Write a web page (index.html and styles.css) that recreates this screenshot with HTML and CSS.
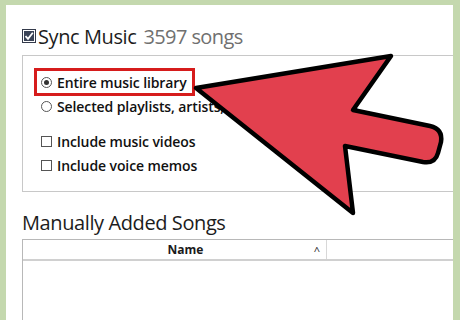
FILE: index.html
```html
<!DOCTYPE html>
<html>
<head>
<meta charset="utf-8">
<link rel="stylesheet" href="styles.css">
</head>
<body>
<div class="panel">
  <div class="sync-row">
    <svg class="big-check" width="14" height="14" viewBox="0 0 14 14">
      <rect x="0.5" y="0.5" width="13" height="13" fill="#fff" stroke="#333a4a"/>
      <rect x="2" y="2" width="10" height="10" fill="#3a4356"/>
      <path d="M3.5 7.2 L6 9.8 L10.8 3.8" fill="none" stroke="#fff" stroke-width="1.8"/>
    </svg>
    <span class="sync-title">Sync Music</span>
    <span class="sync-count">3597 songs</span>
  </div>
  <div class="group">
    <div class="option highlighted">
      <span class="radio checked"></span>
      <span class="label">Entire music library</span>
    </div>
    <div class="option">
      <span class="radio"></span>
      <span class="label">Selected playlists, artists, albums, and genres</span>
    </div>
    <div class="option check-opt first-check">
      <span class="box"></span>
      <span class="label">Include music videos</span>
    </div>
    <div class="option check-opt">
      <span class="box"></span>
      <span class="label">Include voice memos</span>
    </div>
  </div>
  <div class="manual-title">Manually Added Songs</div>
  <div class="table">
    <div class="thead">
      <div class="th-name"><span class="name">Name</span><span class="caret">^</span></div>
      <div class="th-rest"></div>
    </div>
    <div class="tbody"></div>
  </div>
  <svg class="arrow" width="460" height="320" viewBox="0 0 460 320">
    <path d="M196 88 L391 56 L353 110 L430 126 Q443 129 441 142 L438 153 Q435 164 423 162 L345 146 L353 213 Z"
      fill="#e2404e" stroke="#000" stroke-width="4.5" stroke-linejoin="round"/>
  </svg>
</div>
</body>
</html>
```
FILE: styles.css
```css
html, body {
  margin: 0;
  padding: 0;
}
body {
  background: #c4d8ae;
  width: 460px;
  height: 320px;
  overflow: hidden;
  font-family: "Open Sans", "Noto Sans", sans-serif;
  color: #1a1a1a;
}
.panel {
  position: relative;
  margin: 5px 0 0 6px;
  width: 447px;
  height: 315px;
  background: #fff;
  padding-left: 16px;
  box-sizing: border-box;
}
.sync-row {
  display: flex;
  align-items: center;
  height: 50px;
  padding-top: 12px;
  box-sizing: border-box;
}
.big-check {
  margin-right: 2px;
}
.sync-title {
  font-size: 20px;
  color: #1c1c1c;
  letter-spacing: -0.4px;
}
.sync-count {
  font-size: 20px;
  color: #707070;
  margin-left: 7px;
  letter-spacing: -0.6px;
}
.group {
  border: 1px solid #c8c8c8;
  border-right: none;
  height: 137px;
  box-sizing: border-box;
  padding-top: 13px;
  padding-left: 18px;
}
.option {
  display: flex;
  align-items: center;
  height: 24px;
  font-size: 14px;
  font-weight: 600;
  color: #111;
  white-space: nowrap;
  overflow: hidden;
}
.option .label {
  letter-spacing: -0.1px;
}
.highlighted {
  width: 159px;
  height: 26px;
  margin-left: -6px;
  margin-bottom: -1px;
  padding-left: 6px;
  box-sizing: border-box;
  outline: 3px solid #d61c1c;
  outline-offset: -2px;
}
.radio {
  width: 11px;
  height: 11px;
  border: 1px solid #555;
  border-radius: 50%;
  margin-right: 5px;
  box-sizing: border-box;
  position: relative;
  flex: none;
}
.radio.checked::after {
  content: "";
  position: absolute;
  left: 2px;
  top: 2px;
  width: 5px;
  height: 5px;
  border-radius: 50%;
  background: #333;
}
.first-check {
  margin-top: 11px;
}
.box {
  width: 11px;
  height: 11px;
  border: 1px solid #555;
  margin-right: 5px;
  box-sizing: border-box;
  flex: none;
}
.manual-title {
  font-size: 20px;
  color: #1c1c1c;
  margin-top: 14px;
  height: 33px;
  line-height: 33px;
  letter-spacing: -0.4px;
}
.table {
  border: 1px solid #b8b8b8;
  border-right: none;
  border-bottom: none;
  height: 90px;
}
.thead {
  display: flex;
  height: 19px;
  border-bottom: 2px solid #d0d0d0;
}
.th-name {
  width: 303px;
  border-right: 1px solid #d8d8d8;
  position: relative;
  display: flex;
  align-items: center;
  justify-content: center;
  font-size: 12px;
  font-weight: 700;
}
.name {
  margin-left: 22px;
}
.caret {
  position: absolute;
  right: 6px;
  top: 3px;
  font-size: 11px;
  font-weight: 400;
}
.arrow {
  position: absolute;
  left: -6px;
  top: -5px;
}
```
